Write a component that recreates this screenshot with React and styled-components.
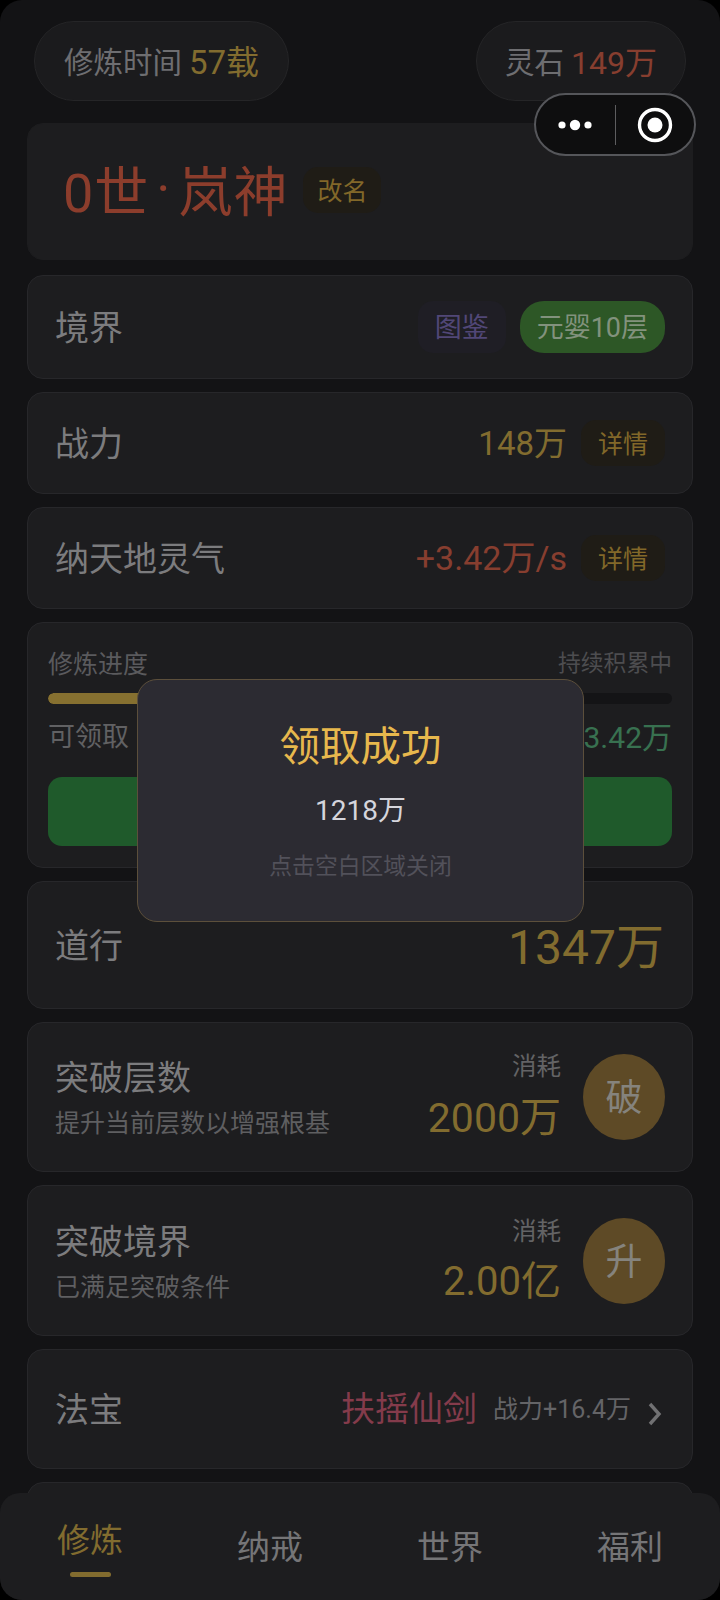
import React from "react";
import styled, { createGlobalStyle } from "styled-components";

const Global = createGlobalStyle`
  html, body { margin: 0; padding: 0; background: #000; }
  * { box-sizing: border-box; }
`;
const Page = styled.div`
  position: relative; width: 720px; height: 1600px; overflow: hidden;
  background: #131315; border-radius: 22px;
  font-family: Roboto, "Noto Sans CJK SC", sans-serif; font-weight: 400;
  color: #808082;
`;
const TopBar = styled.div`
  display: flex; justify-content: space-between; padding: 21px 34px 0 34px; height: 123px;
`;
const Pill = styled.div`
  height: 80px; padding: 0 ${p => p.$px || 29}px 3px; border-radius: 40px; background: #1b1b1d; border: 1px solid #252527;
  display: flex; align-items: center; gap: 7px; font-size: 29.5px; color: #6e6e71;
`;
const Gold = styled.span`
  color: ${p => p.$c || "#826c2f"};
  font-size: ${p => p.$s || 30}px;
`;
const RowValue = styled(Gold)`
  padding-bottom: 5px;
`;
const BigValue = styled(Gold)`
  padding-bottom: 5px; margin-right: 1px;
`;
const Stack = styled.div`
  display: flex; flex-direction: column; gap: 13px; padding: 0 27px;
`;
const Card = styled.div`
  height: ${p => p.$h}px; padding: 0 27px; border-radius: 16px; background: #1d1d1f;
  border: 1px solid #27272a; display: flex; align-items: center; justify-content: space-between;
`;
const NameCard = styled(Card)`
  border-color: #1d1d1f; justify-content: flex-start; padding: 0 35px; gap: 15px; margin-bottom: 2px;
`;
const Name = styled.div`
  font-size: 54px; color: #8c3d2c; letter-spacing: 1px; margin-top: -7px; display: flex; align-items: center;
`;
const NameDot = styled.span` margin: 0 7px; `;
const Tag = styled.div`
  height: ${p => p.$h || 46}px; padding: 0 ${p => p.$px || 17}px 3px; border-radius: ${p => p.$r || 15}px; background: ${p => p.$bg || "#1f1c16"};
  color: ${p => p.$c || "#826829"}; font-size: ${p => p.$s || 25}px;
  display: flex; align-items: center;
`;
const NameTag = styled(Tag)` margin-top: -3px; `;
const Label = styled.div`
  font-size: 34px; color: #7c7c7e; margin-bottom: 4px;
`;
const Right = styled.div`
  display: flex; align-items: center; gap: ${p => p.$g ?? 14}px;
`;
const ProgressCard = styled.div`
  height: 246px; padding: 24px 20px 0 20px; border-radius: 16px; background: #1d1d1f; border: 1px solid #27272a;
`;
const Between = styled.div`
  display: flex; justify-content: space-between; align-items: center; height: ${p => p.$h}px; margin-bottom: ${p => p.$mb || 0}px;
  padding-bottom: 5px;
  font-size: ${p => p.$s || 25}px; color: ${p => p.$c || "#5a5a5d"};
`;
const SmallNote = styled.span` font-size: 22.8px; color: #4d4d50; `;
const Track = styled.div`
  height: 11px; border-radius: 6px; background: #141416; overflow: hidden; margin-bottom: 13px;
`;
const Fill = styled.div`
  height: 100%; border-radius: 6px; background: #867030;
`;
const Green = styled.span` color: #387150; font-size: 30px; `;
const ClaimButton = styled.div`
  height: 69px; border-radius: 14px; background: #1f5a2b; margin-top: 20px;
`;
const Titles = styled.div`
  display: flex; flex-direction: column; gap: 3px; margin-bottom: 4px;
`;
const Title = styled.div` font-size: 34px; color: #7c7c7e; `;
const Sub = styled.div` font-size: 25px; color: #5f5f61; `;
const Cost = styled.div`
  display: flex; flex-direction: column; align-items: flex-end;
`;
const CostLabel = styled.div` font-size: 24.5px; color: #636365; line-height: 34px; `;
const Round = styled.div`
  width: 82px; height: 86px; border-radius: 50%; background: #5e4a26; color: #85837d; font-size: 37px; padding-bottom: 4px;
  display: flex; align-items: center; justify-content: center;
`;
const Modal = styled.div`
  position: absolute; left: 137px; top: 679px; width: 447px; height: 243px;
  border-radius: 20px; background: #2c2b32; border: 1px solid #5c4f3b;
  display: flex; flex-direction: column; align-items: center; padding-top: 40px;
`;
const ModalTitle = styled.div` font-size: 40.5px; color: #e7b84d; line-height: 54px; `;
const ModalValue = styled.div` font-size: 28px; color: #d5d5dc; line-height: 40px; margin-top: 17px; `;
const ModalHint = styled.div` font-size: 22.8px; color: #52515a; line-height: 32px; margin-top: 20px; `;
const Capsule = styled.div`
  position: absolute; left: 534px; top: 93px; width: 162px; height: 63px; border-radius: 32px;
  background: #0e0e0f; border: 2px solid #55565a; display: flex; align-items: center;
`;
const CapsuleSide = styled.div`
  width: 80px; height: 100%; display: flex; align-items: center; justify-content: center;
`;
const CapsuleDivider = styled.div` width: 1px; height: 40px; background: #5d5d5f; `;
const TabBar = styled.div`
  position: absolute; left: 0; right: 0; bottom: 0; height: 107px; background: #1d1d1f;
  border-radius: 20px; display: grid; grid-template-columns: repeat(4, 180px);
`;
const Tab = styled.div`
  display: flex; flex-direction: column; align-items: center; padding-top: ${p => p.$active ? 25 : 32}px;
  font-size: 33px; line-height: 46px; color: ${p => p.$active ? "#826c2f" : "#757577"};
`;
const TabLine = styled.div`
  width: 41px; height: 5px; border-radius: 3px; background: #826c2f; margin-top: 8px;
`;
const Chevron = styled.svg` width: 15px; height: 24px; margin-top: 9px; margin-right: 3px; `;

export default function App() {
  return (
    <Page>
      <Global />
      <TopBar>
        <Pill>修炼时间 <Gold $s={33}>57载</Gold></Pill>
        <Pill $px={28}>灵石 <Gold $c="#873e2f" $s={32}>149万</Gold></Pill>
      </TopBar>
      <Stack>
        <NameCard $h={137}>
          <Name>0世<NameDot>·</NameDot>岚神</Name>
          <NameTag $px={14}>改名</NameTag>
        </NameCard>
        <Card $h={104}>
          <Label>境界</Label>
          <Right $g={14}>
            <Tag $bg="#1f1e25" $c="#514777" $s={27} $h={52}>图鉴</Tag>
            <Tag $bg="#2d5726" $c="#82927d" $s={27} $h={52} $r={24}>元婴10层</Tag>
          </Right>
        </Card>
        <Card $h={102}>
          <Label>战力</Label>
          <Right>
            <RowValue $s={33}>148万</RowValue>
            <Tag>详情</Tag>
          </Right>
        </Card>
        <Card $h={102}>
          <Label>纳天地灵气</Label>
          <Right>
            <RowValue $c="#873e2f" $s={34}>+3.42万/s</RowValue>
            <Tag>详情</Tag>
          </Right>
        </Card>
        <ProgressCard>
          <Between $h={34} $mb={12}>
            <span>修炼进度</span>
            <SmallNote>持续积累中</SmallNote>
          </Between>
          <Track><Fill style={{ width: "40%" }} /></Track>
          <Between $h={40} $c="#616163" $s={27}>
            <span>可领取</span>
            <Green>+3.42万</Green>
          </Between>
          <ClaimButton />
        </ProgressCard>
        <Card $h={128}>
          <Label>道行</Label>
          <BigValue $s={48}>1347万</BigValue>
        </Card>
        <Card $h={150}>
          <Titles>
            <Title>突破层数</Title>
            <Sub>提升当前层数以增强根基</Sub>
          </Titles>
          <Right $g={22}>
            <Cost>
              <CostLabel>消耗</CostLabel>
              <Gold $s={41}>2000万</Gold>
            </Cost>
            <Round>破</Round>
          </Right>
        </Card>
        <Card $h={151}>
          <Titles>
            <Title>突破境界</Title>
            <Sub>已满足突破条件</Sub>
          </Titles>
          <Right $g={22}>
            <Cost>
              <CostLabel>消耗</CostLabel>
              <Gold $s={40}>2.00亿</Gold>
            </Cost>
            <Round>升</Round>
          </Right>
        </Card>
        <Card $h={120}>
          <Label>法宝</Label>
          <Right $g={16}>
            <RowValue $c="#843b4b" $s={34}>扶摇仙剑</RowValue>
            <RowValue $c="#646467" $s={25}>战力+16.4万</RowValue>
            <Chevron viewBox="0 0 15 24" fill="none" stroke="#717173" strokeWidth="3.4">
              <path d="M3 2l9 10-9 10" />
            </Chevron>
          </Right>
        </Card>
        <Card $h={80} />
      </Stack>
      <Modal>
        <ModalTitle>领取成功</ModalTitle>
        <ModalValue>1218万</ModalValue>
        <ModalHint>点击空白区域关闭</ModalHint>
      </Modal>
      <Capsule>
        <CapsuleSide>
          <svg width="36" height="14" viewBox="0 0 36 14" fill="#fff">
            <circle cx="5" cy="7" r="3.6" /><circle cx="18" cy="7" r="5.2" /><circle cx="31" cy="7" r="3.6" />
          </svg>
        </CapsuleSide>
        <CapsuleDivider />
        <CapsuleSide>
          <svg width="36" height="36" viewBox="0 0 36 36">
            <circle cx="18" cy="18" r="15.5" fill="none" stroke="#fff" strokeWidth="3.4" />
            <circle cx="18" cy="18" r="7.5" fill="#fff" />
          </svg>
        </CapsuleSide>
      </Capsule>
      <TabBar>
        <Tab $active>修炼<TabLine /></Tab>
        <Tab>纳戒</Tab>
        <Tab>世界</Tab>
        <Tab>福利</Tab>
      </TabBar>
    </Page>
  );
}
